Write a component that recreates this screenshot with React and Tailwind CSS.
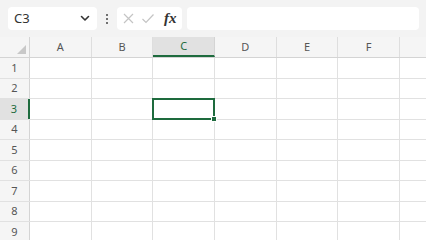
import React from 'react';

const cols = ['A', 'B', 'C', 'D', 'E', 'F', 'G'];
const rows = [1, 2, 3, 4, 5, 6, 7, 8, 9];

function Toolbar() {
    return (
        <div className="h-[37px] bg-[#f3f3f3] flex items-center pl-[8px] pr-[7px] gap-0">
            <div className="w-[89px] h-[23px] bg-white rounded-[4px] flex items-center justify-between pl-[6px] pr-[7px]">
                <span className="text-[13px] text-[#333]">C3</span>
                <svg width="10" height="7" viewBox="0 0 10 7">
                    <path d="M1.5 1.5 L5 5 L8.5 1.5" fill="none" stroke="#333" strokeWidth="1.6" strokeLinecap="round" strokeLinejoin="round" />
                </svg>
            </div>
            <div className="w-[20px] flex flex-col items-center gap-[2px]">
                <span className="w-[2px] h-[2px] bg-[#444] rounded-full" />
                <span className="w-[2px] h-[2px] bg-[#444] rounded-full" />
                <span className="w-[2px] h-[2px] bg-[#444] rounded-full" />
            </div>
            <div className="w-[65px] h-[23px] bg-white rounded-[4px] flex items-center pl-[5px] gap-[6px]">
                <svg width="13" height="13" viewBox="0 0 13 13">
                    <path d="M2 2 L11 11 M11 2 L2 11" stroke="#c4c4c4" strokeWidth="1.2" />
                </svg>
                <svg width="14" height="13" viewBox="0 0 14 13">
                    <path d="M1.5 7 L5 10.5 L12.5 2.5" fill="none" stroke="#c4c4c4" strokeWidth="1.2" />
                </svg>
                <span className="ml-[3px] text-[15px] italic font-semibold text-[#333] leading-none" style={{fontFamily: '"Liberation Serif", serif'}}>fx</span>
            </div>
            <div className="ml-[5px] flex-1 h-[23px] bg-white rounded-[4px]" />
        </div>
    );
}

function App() {
    return (
        <div className="w-[426px] h-[240px] overflow-hidden bg-white" style={{fontFamily: '"Noto Sans", "Open Sans", sans-serif'}}>
            <Toolbar />
            <div className="flex h-[21px] bg-[#f5f5f5] border-b border-[#d4d4d4]">
                <div className="w-[30px] shrink-0 border-r border-[#d4d4d4] relative">
                    <svg className="absolute right-[3px] bottom-[3px]" width="9" height="9" viewBox="0 0 9 9">
                        <path d="M9 0 L9 9 L0 9 Z" fill="#c8c8c8" />
                    </svg>
                </div>
                {cols.map((c) => (
                    <div
                        key={c}
                        className={
                            c === 'C'
                                ? 'w-[61.67px] shrink-0 flex items-center justify-center text-[11px] text-[#1e6b3e] bg-[#e1e1e1] border-r border-[#d4d4d4] border-b-2 border-b-[#1e6b3e]'
                                : 'w-[61.67px] shrink-0 flex items-center justify-center text-[11px] text-[#555] border-r border-[#dedede]'
                        }
                    >
                        {c === 'G' ? '' : c}
                    </div>
                ))}
            </div>
            {rows.map((r) => (
                <div key={r} className="flex h-[20.5px] border-b border-[#e1e1e1]">
                    <div
                        className={
                            r === 3
                                ? 'w-[30px] shrink-0 flex items-center justify-center text-[11px] text-[#1e6b3e] bg-[#e1e1e1] border-r-2 border-[#1e6b3e]'
                                : 'w-[30px] shrink-0 flex items-center justify-center text-[11px] text-[#555] bg-[#f5f5f5] border-r border-[#d4d4d4]'
                        }
                    >
                        {r}
                    </div>
                    {cols.map((c) => (
                        <div key={c} className="w-[61.67px] shrink-0 border-r border-[#e1e1e1] relative">
                            {r === 3 && c === 'C' && (
                                <div className="absolute -left-[1px] -top-[1px] -right-[1px] -bottom-[1px] border-2 border-[#1e6b3e] z-10">
                                    <div className="absolute -right-[4px] -bottom-[4px] w-[6px] h-[6px] bg-[#1e6b3e] border border-white" />
                                </div>
                            )}
                        </div>
                    ))}
                </div>
            ))}
        </div>
    );
}

export default App;
